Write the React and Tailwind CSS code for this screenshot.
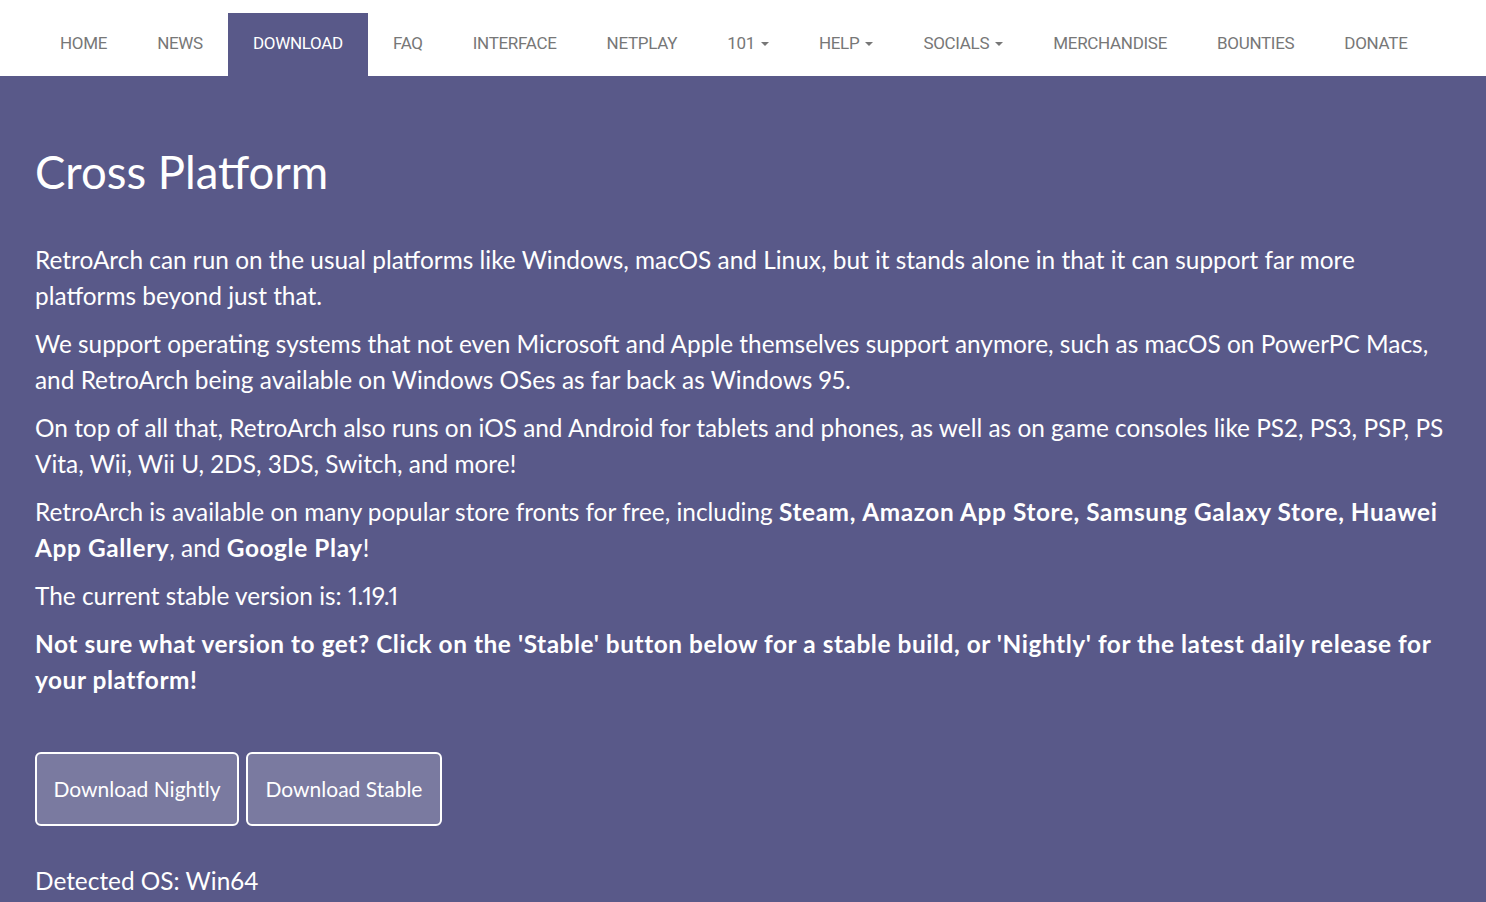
import React from 'react';

const navItems = [
  { label: 'HOME' },
  { label: 'NEWS' },
  { label: 'DOWNLOAD', active: true },
  { label: 'FAQ' },
  { label: 'INTERFACE' },
  { label: 'NETPLAY' },
  { label: '101', caret: true },
  { label: 'HELP', caret: true },
  { label: 'SOCIALS', caret: true },
  { label: 'MERCHANDISE' },
  { label: 'BOUNTIES' },
  { label: 'DONATE' },
];

const Caret = () => (
  <span className="ml-[6px] inline-block w-0 h-0 border-l-[4px] border-r-[4px] border-t-[4px] border-l-transparent border-r-transparent border-t-[#777] align-middle" />
);

const Navigation = () => {
  return (
    <nav className="bg-white h-[76px] pl-[35px] flex items-end">
      {navItems.map((item) => (
        <a
          key={item.label}
          href="#"
          className={
            item.active
              ? 'h-[63px] px-[25px] flex items-center pb-[2px] bg-[#595989] text-white'
              : 'h-[63px] px-[25px] flex items-center pb-[2px] text-[#777]'
          }
        >
          {item.label}
          {item.caret && <Caret />}
        </a>
      ))}
    </nav>
  );
};

const B = ({ children }) => <strong className="font-bold tracking-[0.6px]">{children}</strong>;

export default function App() {
  return (
    <div className="min-h-[902px] bg-[#595989] text-white font-['Lato',sans-serif]">
      <div className="font-['Roboto',sans-serif] text-[17px] tracking-[-0.3px]">
        <Navigation />
      </div>
      <main className="px-[35px] pt-[70px] pb-10 proportional-nums">
        <h1 className="text-[45.5px] leading-[52px] mb-[44px]">Cross Platform</h1>
        <div className="text-[24.4px] leading-[36px] flex flex-col gap-[12px]">
          <p>
            RetroArch can run on the usual platforms like Windows, macOS and Linux, but it stands alone in that it can support far more platforms beyond just that.
          </p>
          <p>
            We support operating systems that not even Microsoft and Apple themselves support anymore, such as macOS on PowerPC Macs, and RetroArch being available on Windows OSes as far back as Windows 95.
          </p>
          <p>
            On top of all that, RetroArch also runs on iOS and Android for tablets and phones, as well as on game consoles like PS2, PS3, PSP, PS Vita, Wii, Wii U, 2DS, 3DS, Switch, and more!
          </p>
          <p>
            RetroArch is available on many popular store fronts for free, including <B>Steam,</B> <B>Amazon App Store,</B>{' '}
            <B>Samsung Galaxy Store,</B> <B>Huawei App Gallery</B>, and <B>Google Play</B>!
          </p>
          <p>The current stable version is: 1.19.1</p>
          <p className="font-bold tracking-[0.55px]">
            Not sure what version to get? Click on the 'Stable' button below for a stable build, or 'Nightly' for the latest daily release for your platform!
          </p>
        </div>
        <div className="flex gap-[7px] mt-[54px]">
          <button className="h-[74px] w-[204px] rounded-[6px] border-2 border-white bg-white/20 text-[21px]">
            Download Nightly
          </button>
          <button className="h-[74px] w-[196px] rounded-[6px] border-2 border-white bg-white/20 text-[21px]">
            Download Stable
          </button>
        </div>
        <p className="text-[24.4px] leading-[36px] mt-[37px]">Detected OS: Win64</p>
      </main>
    </div>
  );
}
